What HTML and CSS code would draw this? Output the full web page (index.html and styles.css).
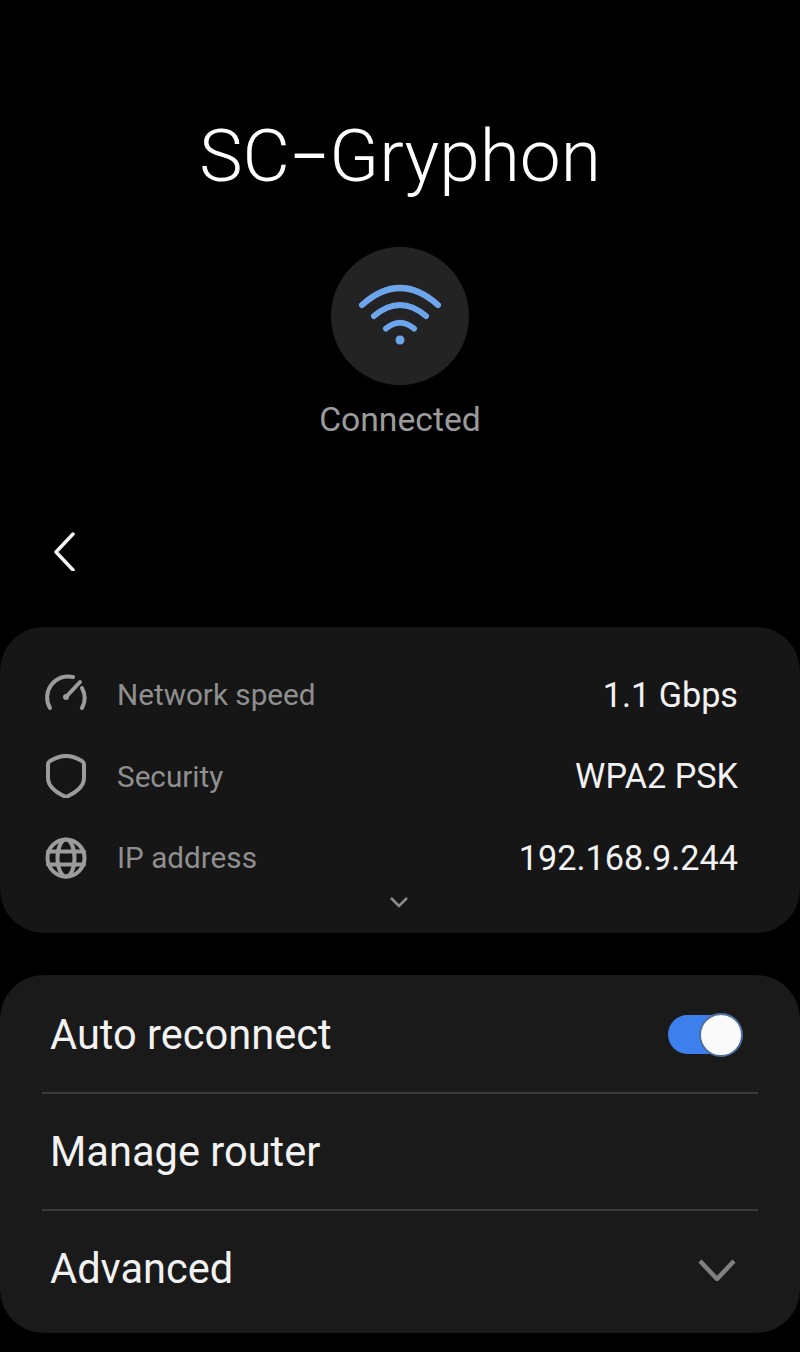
FILE: index.html
```html
<!DOCTYPE html>
<html>
  <head>
    <meta charset="utf-8">
    <title>SC-Gryphon</title>
    <link rel="stylesheet" href="styles.css">
  </head>
  <body>
    <header class="header">
      <h1 class="title">SC<span class="title-dash">–</span>Gryphon</h1>
      <div class="wifi-badge">
        <svg class="wifi-icon" viewBox="0 0 138 138">
          <path d="M31 58 Q69 24 107 58" />
          <path d="M43 69 Q69 47 95 69" />
          <path d="M55 81.500 Q69 70 83 81.500" />
          <circle cx="69" cy="93" r="4.500" />
        </svg>
      </div>
      <div class="status">Connected</div>
    </header>

    <div class="back-row">
      <svg class="back-icon" viewBox="0 0 24 40">
        <path d="M20 3 L3 21 L20 39" />
      </svg>
    </div>

    <section class="card info-card">
      <div class="info-row">
        <svg class="info-icon" viewBox="0 0 44 44">
          <path d="M6 35 A21 21 0 0 1 29 4" />
          <path d="M38 15 A21 21 0 0 1 38 35" />
          <path d="M22 24 L36 9" />
          <circle class="dot" cx="22" cy="24" r="3" />
        </svg>
        <span class="info-label">Network speed</span>
        <span class="info-value">1.1 Gbps</span>
      </div>
      <div class="info-row">
        <svg class="info-icon" viewBox="0 0 44 44">
          <path d="M22 2 C28 2 33 4 38 7 Q40 8 40 11 L40 24 C40 33 31 39 22 43 C13 39 4 33 4 24 L4 11 Q4 8 6 7 C11 4 16 2 22 2 Z" />
        </svg>
        <span class="info-label">Security</span>
        <span class="info-value">WPA2 PSK</span>
      </div>
      <div class="info-row">
        <svg class="info-icon" viewBox="0 0 44 44">
          <circle cx="22" cy="22" r="18.500" />
          <ellipse cx="22" cy="22" rx="8.500" ry="18.500" />
          <path d="M4 15.500 L40 15.500 M4 28.500 L40 28.500" />
        </svg>
        <span class="info-label">IP address</span>
        <span class="info-value">192.168.9.244</span>
      </div>
      <svg class="more-icon" viewBox="0 0 20 12">
        <path d="M2 2 L10 10 L18 2" />
      </svg>
    </section>

    <section class="card menu-card">
      <div class="menu-row">
        <span class="menu-label">Auto reconnect</span>
        <div class="switch"><div class="switch-thumb"></div></div>
      </div>
      <div class="menu-row">
        <span class="menu-label">Manage router</span>
      </div>
      <div class="menu-row">
        <span class="menu-label">Advanced</span>
        <svg class="expand-icon" viewBox="0 0 38 22">
          <path d="M2 2 L19 20 L36 2" />
        </svg>
      </div>
    </section>
  </body>
</html>
```

FILE: styles.css
```css
* {
  box-sizing: border-box;
}
body {
  margin: 0;
  background: #000;
  font-family: Roboto, "Liberation Sans", sans-serif;
  color: #f2f2f2;
}
svg {
  display: block;
  fill: none;
}

.header {
  display: flex;
  flex-direction: column;
  align-items: center;
  padding-top: 110px;
}
.title {
  margin: 0;
  font-size: 73px;
  font-weight: 300;
  line-height: 92px;
  color: #fff;
}
.title-dash {
  font-size: 60px;
  font-weight: 400;
  line-height: 0;
  vertical-align: 4px;
}
.wifi-badge {
  width: 138px;
  height: 138px;
  margin-top: 45px;
  border-radius: 50%;
  background: #232323;
}
.wifi-icon path {
  stroke: #6ea6ee;
  stroke-width: 6;
  stroke-linecap: round;
}
.wifi-icon circle {
  fill: #6ea6ee;
}
.status {
  margin-top: 15px;
  font-size: 33.700px;
  line-height: 40px;
  color: #9b9b9b;
}

.back-row {
  padding: 91px 0 0 53px;
  height: 187px;
}
.back-icon {
  width: 24px;
  height: 40px;
}
.back-icon path {
  stroke: #f5f5f5;
  stroke-width: 3.500;
  stroke-linecap: round;
  stroke-linejoin: round;
}

.card {
  border-radius: 44px;
  background: #161616;
}
.info-card {
  position: relative;
  height: 306px;
  padding: 27px 62px 0 44px;
}
.info-row {
  display: flex;
  align-items: center;
  height: 81.500px;
}
.info-icon {
  width: 44px;
  height: 44px;
  margin-right: 29px;
}
.info-icon path,
.info-icon circle,
.info-icon ellipse {
  stroke: #9c9c9c;
  stroke-width: 4;
  stroke-linecap: round;
}
.info-icon .dot {
  fill: #9c9c9c;
  stroke: none;
}
.info-label {
  font-size: 29.700px;
  color: #8f8f8f;
}
.info-value {
  margin-left: auto;
  font-size: 34.200px;
  color: #f2f2f2;
}
.more-icon {
  position: absolute;
  left: 389px;
  top: 269px;
  width: 20px;
  height: 12px;
}
.more-icon path {
  stroke: #8c8c8c;
  stroke-width: 2.500;
}

.menu-card {
  margin-top: 42px;
  height: 358px;
  padding: 2px 42px 0;
  background: #1a1a1a;
}
.menu-row {
  display: flex;
  align-items: center;
  justify-content: space-between;
  height: 117px;
  padding: 0 22px 0 8px;
  border-bottom: 2px solid #3a3a3a;
}
.menu-row:last-child {
  height: 114px;
  border-bottom: none;
}
.menu-label {
  font-size: 41.600px;
  color: #f2f2f2;
}

.switch {
  position: relative;
  width: 74px;
  height: 39px;
  margin-right: -6px;
  border-radius: 20px;
  background: #3e7fee;
}
.switch-thumb {
  position: absolute;
  right: -1px;
  top: -2.500px;
  width: 44px;
  height: 44px;
  border: 2px solid #4d6f9e;
  border-radius: 50%;
  background: #fafafa;
}
.expand-icon {
  width: 38px;
  height: 22px;
  margin-top: 3px;
}
.expand-icon path {
  stroke: #808080;
  stroke-width: 4.500;
}
```
